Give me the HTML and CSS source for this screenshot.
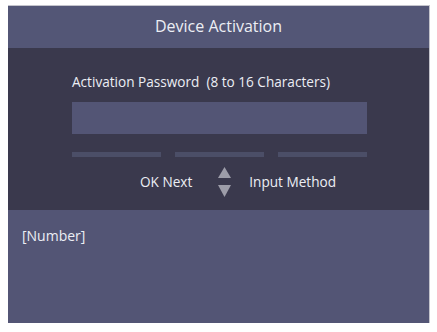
FILE: index.html
```html
<!DOCTYPE html>
<html lang="en">
<head>
    <meta charset="UTF-8">
    <title>Device Activation</title>
    <link rel="stylesheet" href="styles.css">
</head>
<body>
    <div class="screen">
        <div class="title-bar">Device Activation</div>
        <div class="main">
            <div class="label">Activation Password&nbsp; (8 to 16 Characters)</div>
            <div class="pwd-box"></div>
            <div class="strength">
                <span></span>
                <span></span>
                <span></span>
            </div>
            <div class="keys">
                <span class="key-text">OK Next</span>
                <span class="arrows">
                    <svg width="13" height="30" viewBox="0 0 13 30">
                        <polygon points="6.5,0 13,11 0,11" fill="#9d9da9"/>
                        <polygon points="0,18 13,18 6.5,30" fill="#9d9da9"/>
                    </svg>
                </span>
                <span class="key-text">Input Method</span>
            </div>
        </div>
        <div class="hint">
            <div class="hint-text">[Number]</div>
        </div>
    </div>
</body>
</html>
```

FILE: styles.css
```css
body {
    margin: 0;
    padding: 0;
    background-color: #fff;
    font-family: "Open Sans", "Noto Sans", sans-serif;
    color: #eceef4;
}

.screen {
    margin: 5px 0 0 8px;
    width: 421px;
    border-top: 1px solid #c4c4cc;
    border-right: 1px solid #c4c4cc;
}

.title-bar {
    height: 42px;
    background-color: #535676;
    text-align: center;
    font-size: 16px;
    line-height: 41px;
}

.main {
    height: 162px;
    background-color: #3a394d;
    padding: 0 62px 0 64px;
    box-sizing: border-box;
    padding-top: 24px;
}

.label {
    font-size: 13.6px;
    line-height: 20px;
}

.pwd-box {
    margin-top: 10px;
    height: 32px;
    background-color: #535575;
}

.strength {
    margin-top: 18px;
    display: grid;
    grid-template-columns: 1fr 1fr 1fr;
    column-gap: 14px;
}

.strength span {
    height: 5px;
    background-color: #4b4e67;
}

.keys {
    margin-top: 10px;
    padding-left: 68px;
    display: flex;
    align-items: center;
}

.key-text {
    font-size: 13.6px;
    line-height: 20px;
}

.arrows {
    display: flex;
    margin: 0 18px 0 26px;
}

.hint {
    height: 113px;
    background-color: #535575;
    padding: 16px 0 0 14px;
    box-sizing: border-box;
}

.hint-text {
    font-size: 14px;
    line-height: 20px;
}
```
